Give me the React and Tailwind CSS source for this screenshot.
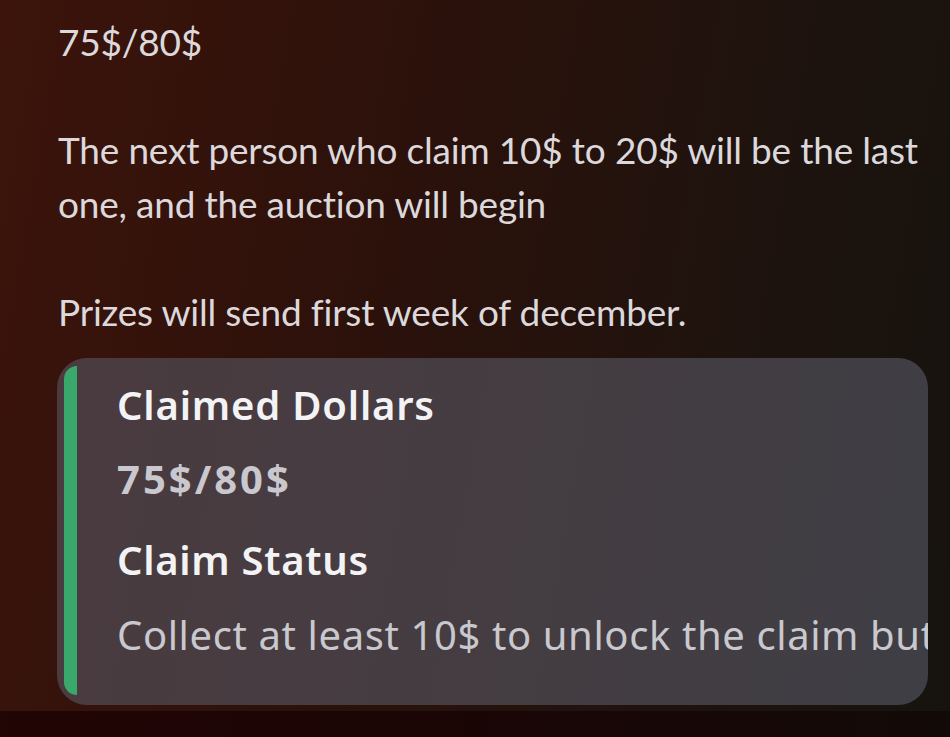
export default function App() {
  return (
    <div
      className="relative w-[950px] h-[737px] overflow-hidden flex flex-col"
      style={{ fontFamily: "Lato, 'Noto Sans', sans-serif" }}
    >
      <div className="flex-1 bg-[linear-gradient(100deg,#3c140b_0%,#2c110b_40%,#1e130e_75%,#16130e_100%)] pt-[15px] pl-[58px] pr-[22px]">
        <div className="text-[37px] leading-[54px] tracking-[-0.2px] text-[#dcd8db] font-normal">
          <p>75$/80$</p>
          <p>&nbsp;</p>
          <p>The next person who claim 10$ to 20$ will be the last one, and the auction will begin</p>
          <p>&nbsp;</p>
          <p>Prizes will send first week of december.</p>
        </div>
        <div className="mt-[19px] -ml-[1px] w-[871px] h-[347px] rounded-[30px] overflow-hidden bg-[linear-gradient(100deg,#4a3b40_0%,#443d42_55%,#3f3e45_100%)] flex">
          <div className="pl-[7px] pt-[8px] pb-[10px] flex">
            <div className="w-[13px] bg-[#3aa86a] rounded-l-[22px]" />
          </div>
          <div
            className="pl-[40px] pt-[28px] whitespace-nowrap text-[40px] leading-[38px]"
            style={{ fontFamily: "'Noto Sans', sans-serif" }}
          >
            <div className="font-semibold text-[#f3f3f5] tracking-[0.8px]">Claimed Dollars</div>
            <div className="mt-[36px] font-bold text-[#c9c8ce] tracking-[3px]">75$/80$</div>
            <div className="mt-[43px] font-semibold text-[#f3f3f5] tracking-[0.7px]">Claim Status</div>
            <div className="mt-[37px] text-[#c9c8ce] tracking-[0.6px]">Collect at least 10$ to unlock the claim button</div>
          </div>
        </div>
      </div>
      <div className="h-[26px] bg-[linear-gradient(90deg,#220505,#1a0505_50%,#120a08)]" />
    </div>
  );
}
